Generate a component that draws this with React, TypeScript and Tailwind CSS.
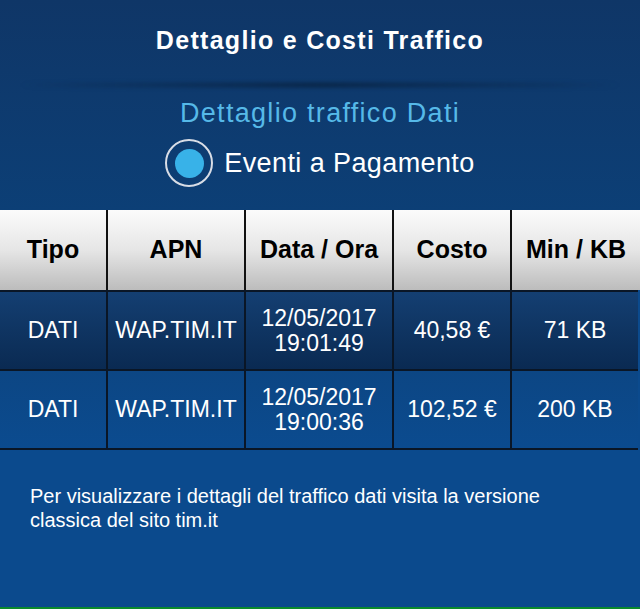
import React from 'react';

type Row = { tipo: string; apn: string; data: string; ora: string; costo: string; qty: string };

const rows: Row[] = [
    { tipo: 'DATI', apn: 'WAP.TIM.IT', data: '12/05/2017', ora: '19:01:49', costo: '40,58 €', qty: '71 KB' },
    { tipo: 'DATI', apn: 'WAP.TIM.IT', data: '12/05/2017', ora: '19:00:36', costo: '102,52 €', qty: '200 KB' },
];

const headers = ['Tipo', 'APN', 'Data / Ora', 'Costo', 'Min / KB'];

const cols = 'grid grid-cols-[108px_138px_148px_118px_1fr]';

const App: React.FC = () => {
    return (
        <div className="w-[640px] h-[609px] flex flex-col overflow-hidden bg-[#0b4a8d] font-['Liberation_Sans',Arial,sans-serif] text-white">
            {/* Intestazione */}
            <div className="h-[210px] flex flex-col items-center bg-gradient-to-b from-[#0f3667] to-[#0c3f76]">
                <h1 className="mt-[26px] text-[25px] leading-[28px] font-bold tracking-[1.3px]">Dettaglio e Costi Traffico</h1>
                <div className="mt-[29px] w-[600px] h-[4px] rounded-full bg-gradient-to-r from-transparent via-[#08213f] to-transparent blur-[2px]" />
                <h2 className="mt-[10px] text-[27px] leading-[32px] tracking-[1.3px] text-[#56b9e8]">Dettaglio traffico Dati</h2>
                <div className="mt-[10px] flex items-center gap-[11px]">
                    <div className="w-[48px] h-[48px] rounded-full border-2 border-[#d8dde6] flex items-center justify-center">
                        <div className="w-[29px] h-[29px] rounded-full bg-[#38b2e8]" />
                    </div>
                    <span className="text-[27px] leading-[32px] tracking-[0.4px]">Eventi a Pagamento</span>
                </div>
            </div>

            {/* Tabella */}
            <div className={`${cols} h-[80px] bg-gradient-to-b from-[#fbfbfb] via-[#e6e6e6] to-[#bcbcbc] text-black`}>
                {headers.map((h, i) => (
                    <div
                        key={h}
                        className={`flex items-center justify-center text-[25px] font-bold ${i < headers.length - 1 ? 'border-r-2 border-[#111]' : ''}`}
                    >
                        {h}
                    </div>
                ))}
            </div>
            {rows.map((r, idx) => (
                <div
                    key={idx}
                    className={`${cols} h-[79px] border-t-2 border-[#0a1626] mr-[2px] ${idx === 0 ? 'bg-gradient-to-b from-[#143f72] to-[#0a2a52]' : 'bg-gradient-to-b from-[#0c4684] to-[#0b4b8f]'}`}
                >
                    {[r.tipo, r.apn, null, r.costo, r.qty].map((v, i) => (
                        <div
                            key={i}
                            className={`flex flex-col items-center justify-center text-[23px] leading-[25px] ${i < 4 ? 'border-r-2 border-[#0a1626]' : ''}`}
                        >
                            {v === null ? (
                                <>
                                    <span>{r.data}</span>
                                    <span>{r.ora}</span>
                                </>
                            ) : v}
                        </div>
                    ))}
                </div>
            ))}
            <div className="h-[2px] mr-[2px] bg-[#0a1626]" />

            {/* Nota */}
            <div className="flex-1 flex flex-col">
                <p className="mt-[34px] px-[30px] text-[20px] leading-[24px]">
                    Per visualizzare i dettagli del traffico dati visita la versione
                    <br />
                    classica del sito tim.it
                </p>
                <div className="mt-auto h-[2px] bg-[#0b8a2c]" />
            </div>
        </div>
    );
};

export default App;
